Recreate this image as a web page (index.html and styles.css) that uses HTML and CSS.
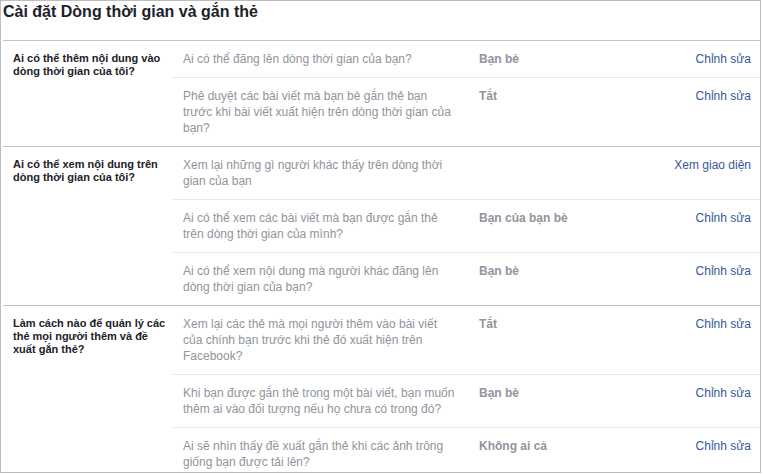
FILE: index.html
```html
<!DOCTYPE html>
<html lang="vi">
<head>
<meta charset="utf-8">
<title>Cài đặt Dòng thời gian và gắn thẻ</title>
<link rel="stylesheet" href="styles.css">
</head>
<body>
<div class="panel">
  <h1 class="title">Cài đặt Dòng thời gian và gắn thẻ</h1>

  <section class="section">
    <div class="section-head">Ai có thể thêm nội dung vào dòng thời gian của tôi?</div>
    <div class="rows">
      <div class="row">
        <div class="desc">Ai có thể đăng lên dòng thời gian của bạn?</div>
        <div class="value">Bạn bè</div>
        <a class="link" href="#">Chỉnh sửa</a>
      </div>
      <div class="row">
        <div class="desc">Phê duyệt các bài viết mà bạn bè gắn thẻ bạn trước khi bài viết xuất hiện trên dòng thời gian của bạn?</div>
        <div class="value">Tắt</div>
        <a class="link" href="#">Chỉnh sửa</a>
      </div>
    </div>
  </section>

  <section class="section">
    <div class="section-head">Ai có thể xem nội dung trên dòng thời gian của tôi?</div>
    <div class="rows">
      <div class="row">
        <div class="desc">Xem lại những gì người khác thấy trên dòng thời gian của bạn</div>
        <div class="value"></div>
        <a class="link" href="#">Xem giao diện</a>
      </div>
      <div class="row">
        <div class="desc">Ai có thể xem các bài viết mà bạn được gắn thẻ trên dòng thời gian của mình?</div>
        <div class="value">Bạn của bạn bè</div>
        <a class="link" href="#">Chỉnh sửa</a>
      </div>
      <div class="row">
        <div class="desc">Ai có thể xem nội dung mà người khác đăng lên dòng thời gian của bạn?</div>
        <div class="value">Bạn bè</div>
        <a class="link" href="#">Chỉnh sửa</a>
      </div>
    </div>
  </section>

  <section class="section">
    <div class="section-head">Làm cách nào để quản lý các thẻ mọi người thêm và đề xuất gắn thẻ?</div>
    <div class="rows">
      <div class="row">
        <div class="desc">Xem lại các thẻ mà mọi người thêm vào bài viết của chính bạn trước khi thẻ đó xuất hiện trên Facebook?</div>
        <div class="value">Tắt</div>
        <a class="link" href="#">Chỉnh sửa</a>
      </div>
      <div class="row">
        <div class="desc">Khi bạn được gắn thẻ trong một bài viết, bạn muốn thêm ai vào đối tượng nếu họ chưa có trong đó?</div>
        <div class="value">Bạn bè</div>
        <a class="link" href="#">Chỉnh sửa</a>
      </div>
      <div class="row">
        <div class="desc">Ai sẽ nhìn thấy đề xuất gắn thẻ khi các ảnh trông giống bạn được tải lên?</div>
        <div class="value">Không ai cả</div>
        <a class="link" href="#">Chỉnh sửa</a>
      </div>
    </div>
  </section>
</div>
</body>
</html>
```

FILE: styles.css
```css
* { box-sizing: border-box; }

html, body {
  margin: 0;
  padding: 0;
  background: #ffffff;
}

body {
  font-family: "Liberation Sans", Arial, Helvetica, sans-serif;
  color: #1d2129;
}

.panel {
  width: 761px;
  height: 473px;
  overflow: hidden;
  border: 1px solid #bdbdbd;
  padding-left: 2px;
  background: #fff;
}

.title {
  margin: 0;
  padding: 1px 0 18px 0;
  font-size: 16px;
  line-height: 20px;
  font-weight: bold;
  color: #1d2129;
}

.section {
  display: flex;
  border-top: 1px solid #c2c2c2;
}

.section-head {
  width: 170px;
  flex: none;
  padding: 11px 6px 0 10px;
  font-size: 11px;
  font-weight: bold;
  line-height: 13px;
  color: #1d2129;
}

.rows {
  flex: 1;
  min-width: 0;
}

.row {
  display: flex;
  align-items: flex-start;
  padding: 10px 9px 10px 10px;
  border-top: 1px solid #e6e6e6;
  line-height: 16px;
}

.row:first-child {
  border-top: none;
}

.desc {
  width: 275px;
  flex: none;
  font-size: 12px;
  color: #90949c;
}

.value {
  flex: 1;
  margin-left: 21px;
  font-size: 12px;
  font-weight: bold;
  color: #90949c;
}

.link {
  flex: none;
  font-size: 12px;
  color: #365899;
  text-decoration: none;
}
```
